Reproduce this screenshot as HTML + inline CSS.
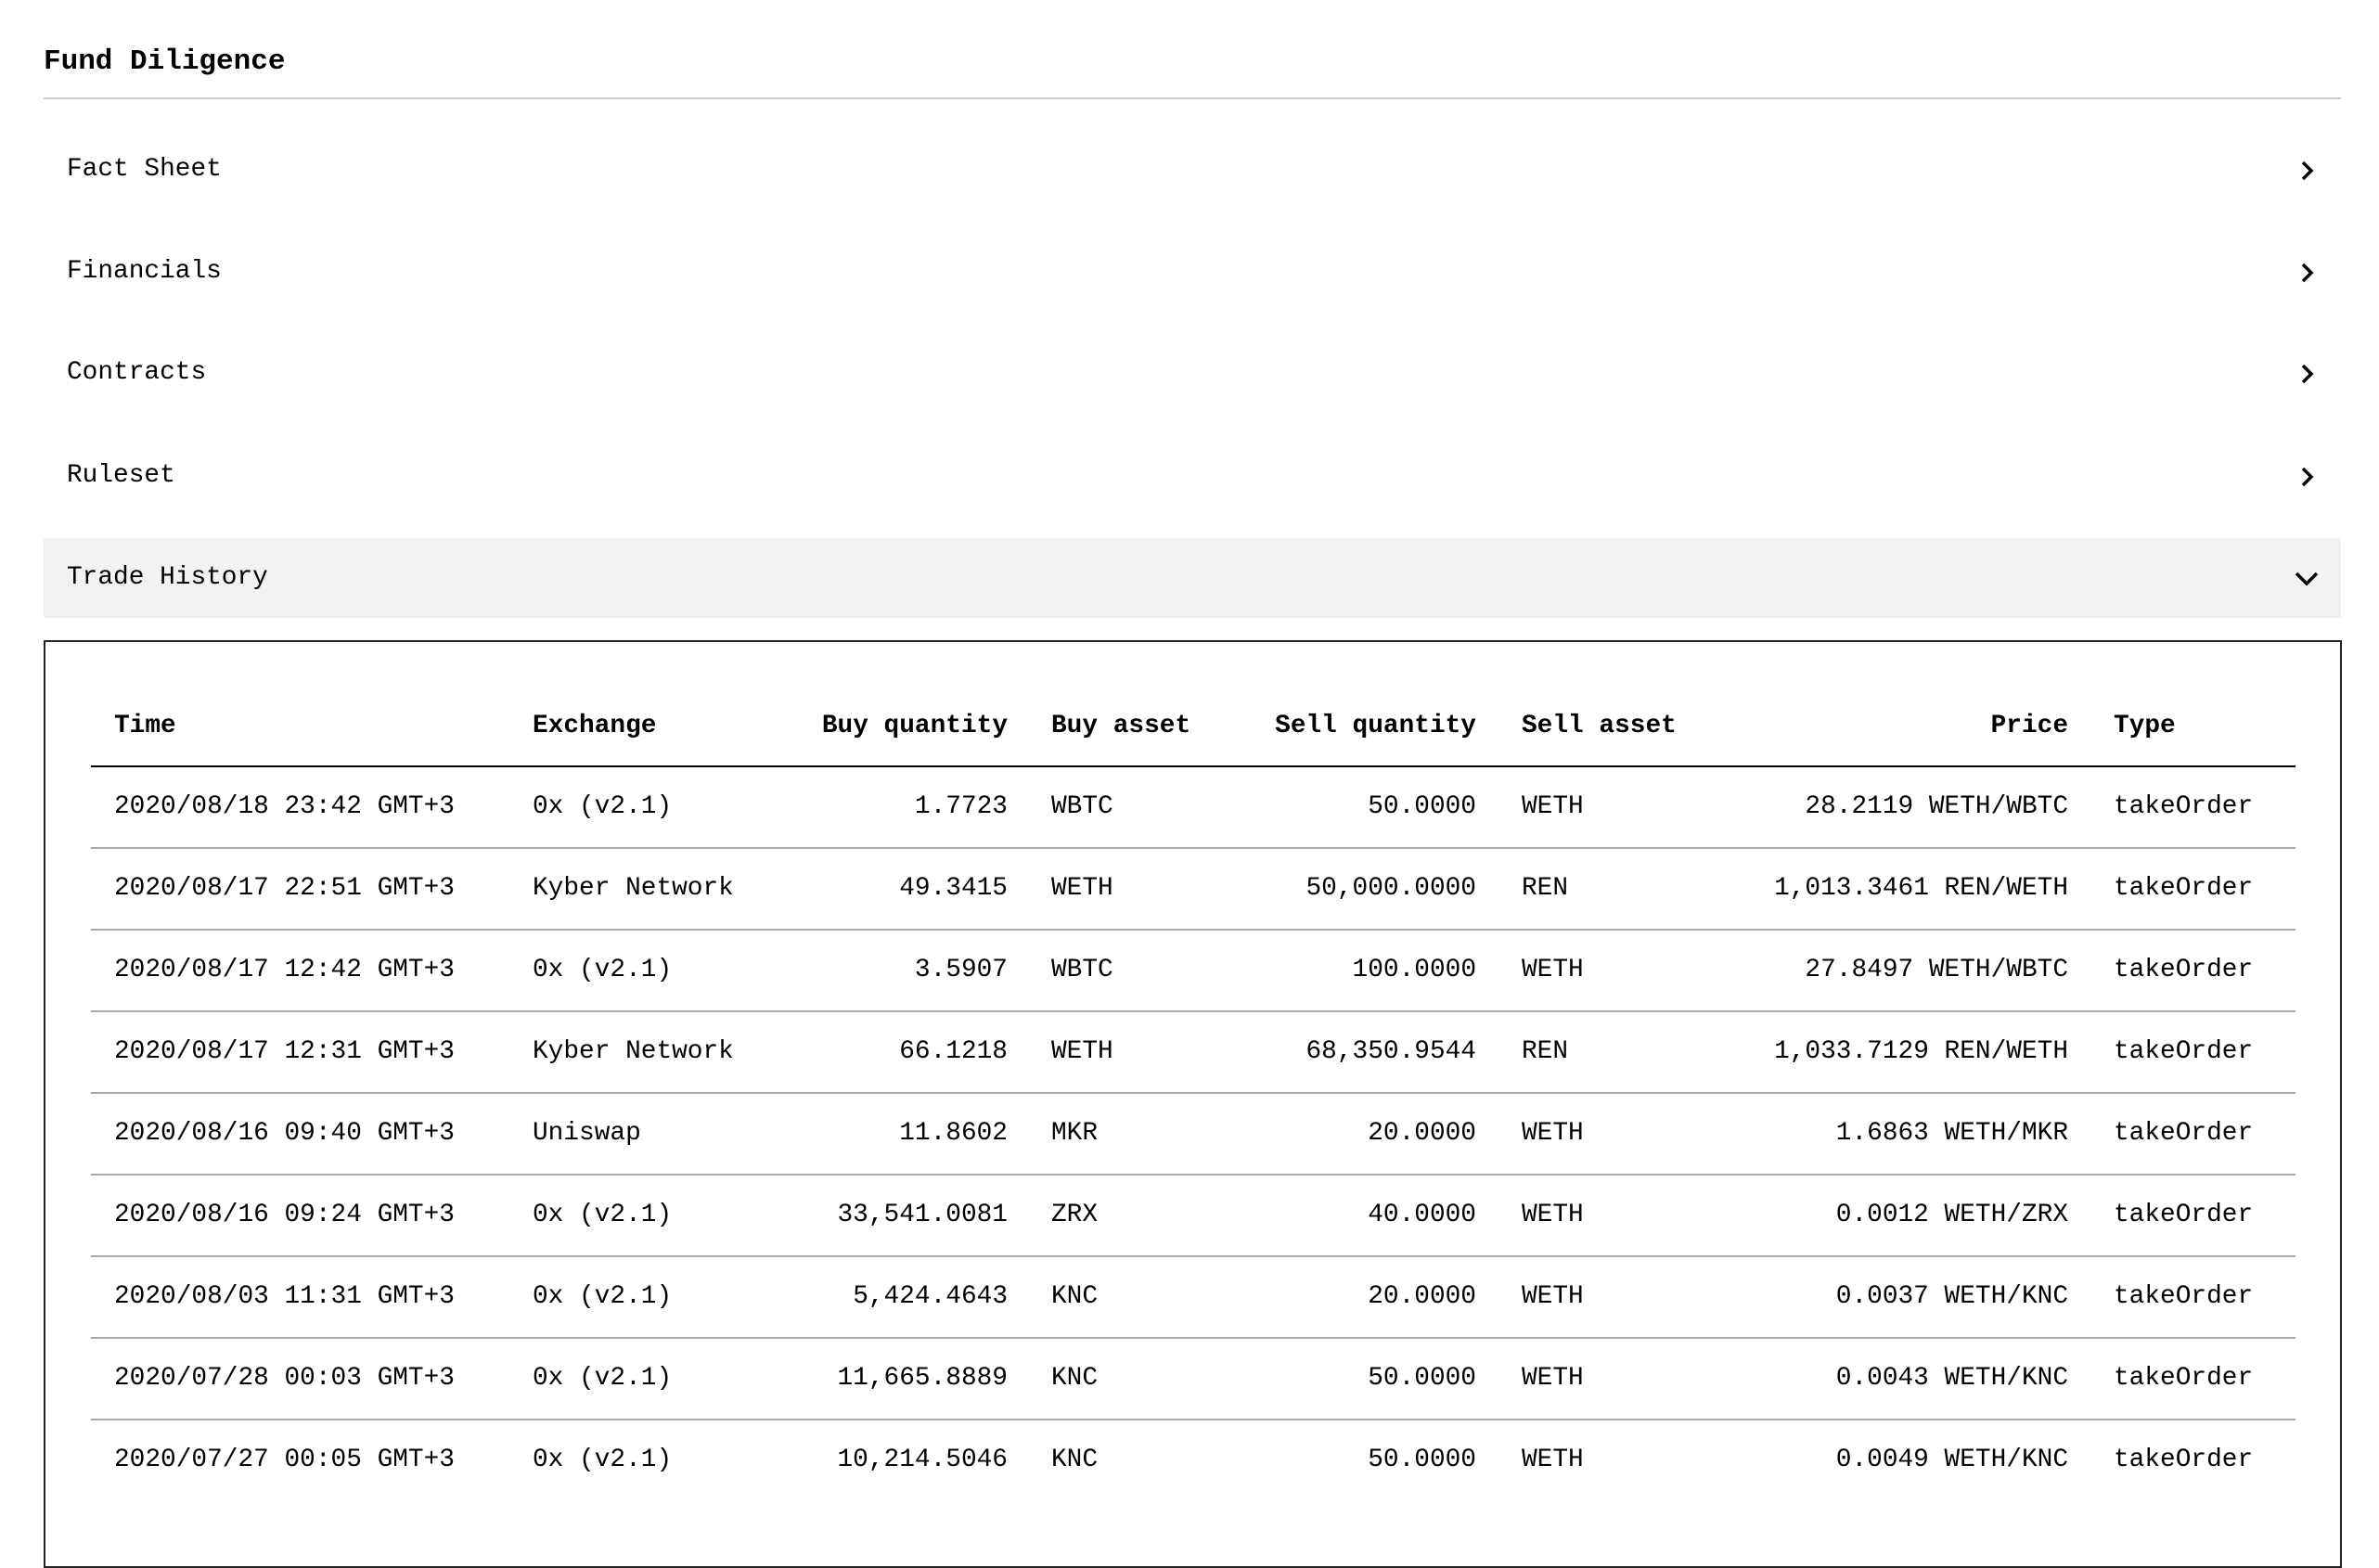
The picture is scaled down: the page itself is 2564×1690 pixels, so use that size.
<!DOCTYPE html>
<html><head><meta charset="utf-8"><style>
*{margin:0;padding:0;box-sizing:border-box}
body{width:2564px;height:1608px;overflow:hidden;background:#fff;position:relative;font-family:"Liberation Mono","Courier New",monospace;color:#000}
.a{position:absolute;white-space:nowrap}
.t{position:absolute;left:47px;top:48px;font-size:31px;font-weight:bold;line-height:38px}
.hr{position:absolute;left:47px;width:2476px;top:105px;height:2px;background:#ccc}
.it{position:absolute;left:47px;width:2476px;height:86px;font-size:27.8px;line-height:86px}
.it span{position:absolute;left:25px}
.it svg{position:absolute;right:28px;top:32px}
.box{position:absolute;left:47px;top:690px;width:2477px;height:1000px;border:2px solid #222}
.row{position:absolute;left:0;width:2564px;height:88px;font-size:27.8px;line-height:88px}
.row span{position:absolute}
.h{font-weight:bold}
.c1{left:123px}.c2{left:574px}.c3{right:1478px}.c4{left:1133px}.c5{right:973px}.c6{left:1640px}.c7{right:335px}.c8{left:2278px}
.sep{position:absolute;left:98px;width:2376px;height:2px;background:#aaa}
</style></head><body>
<div class="t">Fund Diligence</div>
<div class="hr"></div>

<div class="it" style="top:140px"><span>Fact Sheet</span><svg width="16" height="24" viewBox="0 0 16 24"><polyline points="3,3 12,12 3,21" fill="none" stroke="#000" stroke-width="3.5"/></svg></div>
<div class="it" style="top:250px"><span>Financials</span><svg width="16" height="24" viewBox="0 0 16 24"><polyline points="3,3 12,12 3,21" fill="none" stroke="#000" stroke-width="3.5"/></svg></div>
<div class="it" style="top:359px"><span>Contracts</span><svg width="16" height="24" viewBox="0 0 16 24"><polyline points="3,3 12,12 3,21" fill="none" stroke="#000" stroke-width="3.5"/></svg></div>
<div class="it" style="top:470px"><span>Ruleset</span><svg width="16" height="24" viewBox="0 0 16 24"><polyline points="3,3 12,12 3,21" fill="none" stroke="#000" stroke-width="3.5"/></svg></div>
<div class="it" style="top:580px;background:#f2f2f2"><span>Trade History</span><svg width="26" height="18" viewBox="0 0 26 18" style="right:24px;top:35px"><polyline points="2,3 13,14 24,3" fill="none" stroke="#000" stroke-width="3.5"/></svg></div>

<div class="box"></div>

<div class="row h" style="top:739px"><span class="c1">Time</span><span class="c2">Exchange</span><span class="c3">Buy quantity</span><span class="c4">Buy asset</span><span class="c5">Sell quantity</span><span class="c6">Sell asset</span><span class="c7">Price</span><span class="c8">Type</span></div>
<div class="sep" style="top:825px;background:#000"></div>

<div class="row" style="top:826px"><span class="c1">2020/08/18 23:42 GMT+3</span><span class="c2">0x (v2.1)</span><span class="c3">1.7723</span><span class="c4">WBTC</span><span class="c5">50.0000</span><span class="c6">WETH</span><span class="c7">28.2119 WETH/WBTC</span><span class="c8">takeOrder</span></div>
<div class="sep" style="top:913px"></div>
<div class="row" style="top:914px"><span class="c1">2020/08/17 22:51 GMT+3</span><span class="c2">Kyber Network</span><span class="c3">49.3415</span><span class="c4">WETH</span><span class="c5">50,000.0000</span><span class="c6">REN</span><span class="c7">1,013.3461 REN/WETH</span><span class="c8">takeOrder</span></div>
<div class="sep" style="top:1001px"></div>
<div class="row" style="top:1002px"><span class="c1">2020/08/17 12:42 GMT+3</span><span class="c2">0x (v2.1)</span><span class="c3">3.5907</span><span class="c4">WBTC</span><span class="c5">100.0000</span><span class="c6">WETH</span><span class="c7">27.8497 WETH/WBTC</span><span class="c8">takeOrder</span></div>
<div class="sep" style="top:1089px"></div>
<div class="row" style="top:1090px"><span class="c1">2020/08/17 12:31 GMT+3</span><span class="c2">Kyber Network</span><span class="c3">66.1218</span><span class="c4">WETH</span><span class="c5">68,350.9544</span><span class="c6">REN</span><span class="c7">1,033.7129 REN/WETH</span><span class="c8">takeOrder</span></div>
<div class="sep" style="top:1177px"></div>
<div class="row" style="top:1178px"><span class="c1">2020/08/16 09:40 GMT+3</span><span class="c2">Uniswap</span><span class="c3">11.8602</span><span class="c4">MKR</span><span class="c5">20.0000</span><span class="c6">WETH</span><span class="c7">1.6863 WETH/MKR</span><span class="c8">takeOrder</span></div>
<div class="sep" style="top:1265px"></div>
<div class="row" style="top:1266px"><span class="c1">2020/08/16 09:24 GMT+3</span><span class="c2">0x (v2.1)</span><span class="c3">33,541.0081</span><span class="c4">ZRX</span><span class="c5">40.0000</span><span class="c6">WETH</span><span class="c7">0.0012 WETH/ZRX</span><span class="c8">takeOrder</span></div>
<div class="sep" style="top:1353px"></div>
<div class="row" style="top:1354px"><span class="c1">2020/08/03 11:31 GMT+3</span><span class="c2">0x (v2.1)</span><span class="c3">5,424.4643</span><span class="c4">KNC</span><span class="c5">20.0000</span><span class="c6">WETH</span><span class="c7">0.0037 WETH/KNC</span><span class="c8">takeOrder</span></div>
<div class="sep" style="top:1441px"></div>
<div class="row" style="top:1442px"><span class="c1">2020/07/28 00:03 GMT+3</span><span class="c2">0x (v2.1)</span><span class="c3">11,665.8889</span><span class="c4">KNC</span><span class="c5">50.0000</span><span class="c6">WETH</span><span class="c7">0.0043 WETH/KNC</span><span class="c8">takeOrder</span></div>
<div class="sep" style="top:1529px"></div>
<div class="row" style="top:1530px"><span class="c1">2020/07/27 00:05 GMT+3</span><span class="c2">0x (v2.1)</span><span class="c3">10,214.5046</span><span class="c4">KNC</span><span class="c5">50.0000</span><span class="c6">WETH</span><span class="c7">0.0049 WETH/KNC</span><span class="c8">takeOrder</span></div>
</body></html>
